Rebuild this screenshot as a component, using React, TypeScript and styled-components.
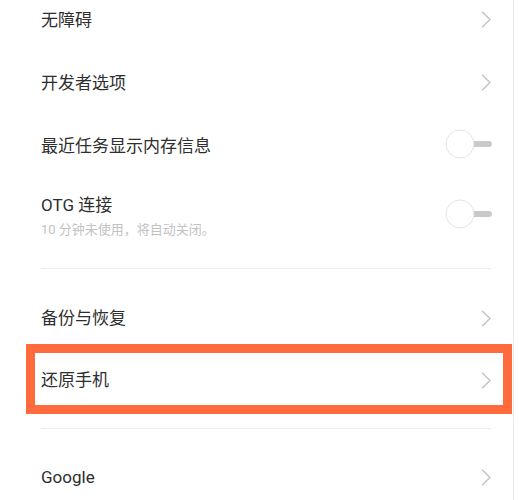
import styled, { createGlobalStyle } from "styled-components";

const GlobalStyle = createGlobalStyle`
  html, body {
    margin: 0;
    padding: 0;
    background: #fff;
    overflow: hidden;
  }
  body {
    font-family: Roboto, "Noto Sans CJK SC", sans-serif;
  }
`;

type Item =
  | { kind: "link"; title: string; height: number; highlight?: boolean }
  | { kind: "toggle"; title: string; sub?: string; height: number }
  | { kind: "divider"; before: number; after: number };

const items: Item[] = [
  { kind: "link", title: "无障碍", height: 63 },
  { kind: "link", title: "开发者选项", height: 63 },
  { kind: "toggle", title: "最近任务显示内存信息", height: 63 },
  {
    kind: "toggle",
    title: "OTG 连接",
    sub: "10 分钟未使用，将自动关闭。",
    height: 78,
  },
  { kind: "divider", before: 13, after: 18 },
  { kind: "link", title: "备份与恢复", height: 62 },
  { kind: "link", title: "还原手机", height: 62, highlight: true },
  { kind: "divider", before: 17, after: 17 },
  { kind: "link", title: "Google", height: 62 },
];

export default function App() {
  return (
    <Page>
      <GlobalStyle />
      <List>
        {items.map((item, i) => {
          if (item.kind === "divider") {
            return <Divider key={i} $before={item.before} $after={item.after} />;
          }
          if (item.kind === "toggle") {
            return (
              <Row key={i} $height={item.height}>
                <TextBox>
                  <Title>{item.title}</Title>
                  {item.sub && <Sub>{item.sub}</Sub>}
                </TextBox>
                <Toggle />
              </Row>
            );
          }
          return (
            <Row key={i} $height={item.height} $highlight={item.highlight}>
              <TextBox>
                <Title>{item.title}</Title>
              </TextBox>
              <Chevron />
            </Row>
          );
        })}
      </List>
    </Page>
  );
}

function Chevron() {
  return (
    <ChevronIcon width="11" height="17" viewBox="0 0 11 17">
      <path
        d="M1.5 1.2 L9 8.5 L1.5 15.8"
        fill="none"
        stroke="#c6c6c6"
        strokeWidth="1.6"
        strokeLinecap="round"
        strokeLinejoin="round"
      />
    </ChevronIcon>
  );
}

function Toggle() {
  return (
    <ToggleIcon width="48" height="30" viewBox="0 0 48 30">
      <rect x="26" y="12" width="21" height="6" rx="3" fill="#c9c9c9" />
      <circle cx="15" cy="15" r="14" fill="#fff" stroke="#e4e4e4" strokeWidth="1" />
    </ToggleIcon>
  );
}

const Page = styled.div`
  width: 513px;
  height: 500px;
  border-right: 1px solid #ebebeb;
  background: #fff;
  overflow: hidden;
`;

const List = styled.div`
  margin-top: -12px;
  display: flex;
  flex-direction: column;
`;

const Row = styled.div<{ $height: number; $highlight?: boolean }>`
  position: relative;
  height: ${(p) => p.$height}px;
  padding: 0 21px 0 41px;
  display: flex;
  align-items: center;
  justify-content: space-between;
  box-sizing: border-box;

  ${(p) =>
    p.$highlight &&
    `
    &::after {
      content: "";
      position: absolute;
      top: -5px;
      bottom: -3px;
      left: 26px;
      right: 1px;
      border: 9px solid #ff6b3d;
      pointer-events: none;
    }
  `}
`;

const TextBox = styled.div`
  display: flex;
  flex-direction: column;
  gap: 4px;
`;

const Title = styled.div`
  font-size: 17px;
  line-height: 24px;
  color: #2e2e2e;
`;

const Sub = styled.div`
  font-size: 13px;
  line-height: 18px;
  color: #c2c2c2;
`;

const Divider = styled.div<{ $before: number; $after: number }>`
  height: 1px;
  margin: ${(p) => p.$before}px 22px ${(p) => p.$after}px 41px;
  background: #ececec;
`;

const ChevronIcon = styled.svg`
  display: block;
  flex-shrink: 0;
`;

const ToggleIcon = styled.svg`
  display: block;
  flex-shrink: 0;
  margin-right: -1px;
  margin-top: -4px;
`;
